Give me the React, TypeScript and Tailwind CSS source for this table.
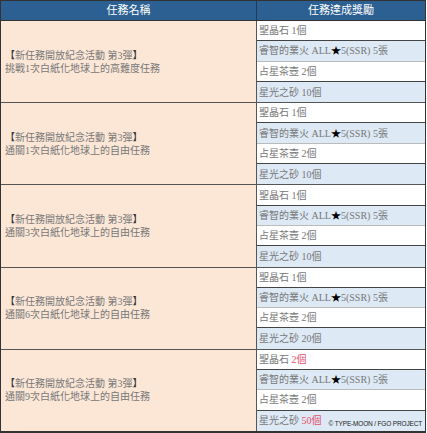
import React from "react";

type Reward = { label: string; value: string; red?: boolean; star?: boolean };

const base = (v1: string, v4: string, red = false): Reward[] => [
  { label: "聖晶石 ", value: v1, red },
  { label: "", value: "5張", star: true },
  { label: "占星茶壺 ", value: "2個" },
  { label: "星光之砂 ", value: v4, red },
];

const groups: { title: string; rewards: Reward[] }[] = [
  { title: "挑戰1次白紙化地球上的高難度任務", rewards: base("1個", "10個") },
  { title: "通關1次白紙化地球上的自由任務", rewards: base("1個", "10個") },
  { title: "通關3次白紙化地球上的自由任務", rewards: base("1個", "10個") },
  { title: "通關6次白紙化地球上的自由任務", rewards: base("1個", "20個") },
  { title: "通關9次白紙化地球上的自由任務", rewards: base("2個", "50個", true) },
];

export default function App() {
  return (
    <div
      className="relative w-[427px] h-[433px] bg-white"
      style={{ fontFamily: '"Liberation Serif", "Noto Sans CJK TC", serif' }}
    >
      <div className="w-[426px] border border-[#333] border-b-2">
        <div className="flex h-[20px] bg-[#2c5f92] text-white text-[11px] border-b border-[#333]">
          <div className="w-[256px] flex items-center justify-center border-r border-[#1e3c5e]">
            任務名稱
          </div>
          <div className="flex-1 flex items-center justify-center">任務達成獎勵</div>
        </div>
        {groups.map((g, gi) => (
          <div
            key={gi}
            className={`flex ${gi < groups.length - 1 ? "border-b border-[#555]" : ""}`}
          >
            <div className="w-[256px] bg-[#fce7d7] border-r border-[#555] flex flex-col justify-center pl-[4px] text-[10px] leading-[13px] text-[#777]">
              <div>
                <span className="text-[#333]">【</span>新任務開放紀念活動 第3彈<span className="text-[#333]">】</span>
              </div>
              <div>{g.title}</div>
            </div>
            <div className="flex-1 flex flex-col">
              {g.rewards.map((r, ri) => (
                <div
                  key={ri}
                  className={`h-[20.3px] flex items-center pl-[2px] text-[10px] text-[#777] ${
                    ri % 2 === 0 ? "bg-white" : "bg-[#dde9f5]"
                  } ${ri < 3 ? (ri % 2 === 0 ? "border-b border-[#444]" : "border-b border-[#bbb]") : ""}`}
                >
                  <span className="whitespace-pre">
                    {r.star ? (
                      <>
                        睿智的業火 ALL<span className="text-black">★</span>5(SSR){" "}
                      </>
                    ) : (
                      r.label
                    )}
                    <span className={r.red ? "text-[#e8506a]" : ""}>{r.value}</span>
                  </span>
                </div>
              ))}
            </div>
          </div>
        ))}
      </div>
      <div
        className="absolute right-[5px] bottom-[4px] text-[6.5px] text-[#222] tracking-tight"
        style={{ fontFamily: '"Liberation Sans", sans-serif' }}
      >
        © TYPE-MOON / FGO PROJECT
      </div>
    </div>
  );
}
